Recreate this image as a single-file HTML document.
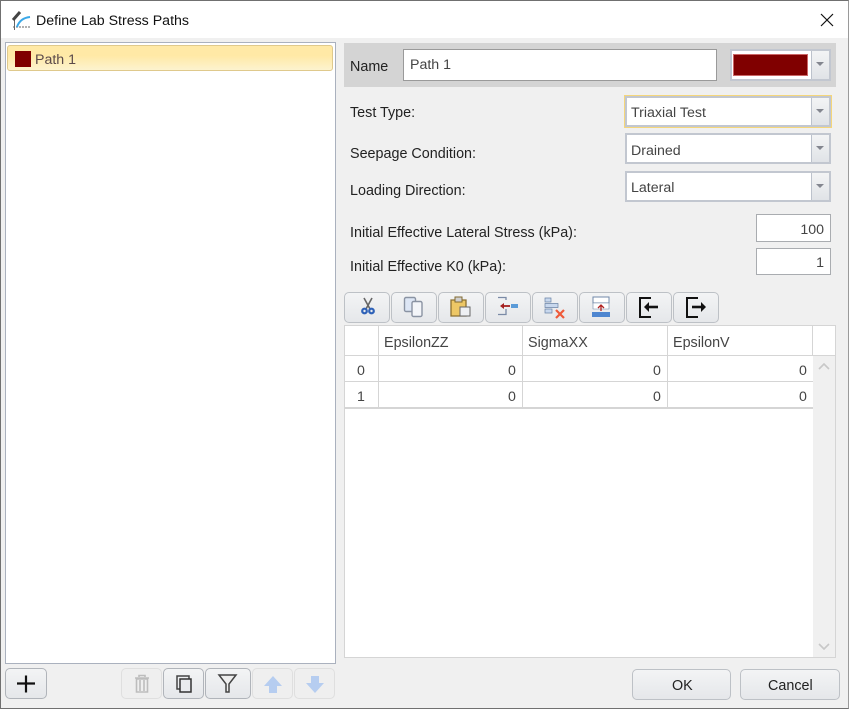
<!DOCTYPE html>
<html><head><meta charset="utf-8"><style>
html,body{margin:0;padding:0;width:849px;height:709px;overflow:hidden;background:#f0f0f0}
body{position:relative;font-family:"Liberation Sans",sans-serif;font-size:14.2px;color:#3a3a3a}
.a{position:absolute;box-sizing:border-box}
.t{position:absolute;white-space:nowrap;line-height:20px;color:#222}
.l{font-size:14.35px}
.btn{position:absolute;box-sizing:border-box;border:1px solid #bdc1c6;border-radius:5px;background:linear-gradient(#f3f4f5,#e5e7ea)}
.dis{border-color:#dfdfdf;background:#efefef}
.input{position:absolute;box-sizing:border-box;background:#fff;border:1px solid #a9acb0}
.combo{position:absolute;box-sizing:border-box;background:#fff;border:2px solid #c2c7d0}
.dd{position:absolute;right:0;top:0;bottom:0;width:17px;background:linear-gradient(#f3f4f5,#e0e3e7);border-left:1px solid #bcc2cc}
.dd:after{content:"";position:absolute;left:4px;top:50%;margin-top:-3px;border:4px solid transparent;border-top:4px solid #83868f;border-bottom:0}
.line{position:absolute;background:#d5d5d5}
svg{position:absolute;left:0;top:0}
</style></head><body>
<div class="a" style="left:0;top:0;width:849px;height:38px;background:#fff"></div>
<svg width="30" height="30" style="left:9px;top:7px">
<path d="M4 20H21" stroke="#666" stroke-width="1" stroke-dasharray="2 1"/><path d="M5.500 13V23" stroke="#666"/>
<path d="M8 20Q11 11 21 10" stroke="#3aa8e8" stroke-width="2" fill="none"/>
<path d="M4 13L11 5" stroke="#444" stroke-width="3"/>
</svg>
<div class="t" style="left:36px;top:11px;color:#111">Define Lab Stress Paths</div>
<svg width="20" height="20" style="left:817px;top:10px"><path d="M4 4L16 16M16 4L4 16" stroke="#111" stroke-width="1.2"/></svg>

<div class="a" style="left:5px;top:42px;width:331px;height:622px;background:#fff;border:1px solid #aab1be"></div>
<div class="a" style="left:7px;top:45px;width:326px;height:26px;border:1px solid #dfc98c;border-radius:3px;background:linear-gradient(#ffe9a6,#ffe9a6 40%,#fdf3cf)"></div>
<div class="a" style="left:15px;top:51px;width:16px;height:16px;background:#800000"></div>
<div class="t" style="left:35px;top:50px;color:#5b4a4a">Path 1</div>

<div class="a" style="left:344px;top:43px;width:492px;height:44px;background:#d4d4d4"></div>
<div class="t l" style="left:350px;top:57px">Name</div>
<div class="input" style="left:403px;top:49px;width:314px;height:32px;border-color:#9a9a9a"></div>
<div class="t" style="left:410px;top:55px;color:#444">Path 1</div>
<div class="combo" style="left:730px;top:49px;width:101px;height:32px"><div class="dd"></div></div>
<div class="a" style="left:733px;top:54px;width:75px;height:22px;background:#800000;border:1px solid #c66"></div>

<div class="t l" style="left:350px;top:103px">Test Type:</div>
<div class="a" style="left:624px;top:95px;width:208px;height:33px;border:1px solid #f5d67a"></div>
<div class="combo" style="left:625px;top:96px;width:206px;height:31px"><div class="dd"></div></div>
<div class="t" style="left:631px;top:103px;color:#444">Triaxial Test</div>
<div class="t l" style="left:350px;top:144px">Seepage Condition:</div>
<div class="combo" style="left:625px;top:133px;width:206px;height:31px"><div class="dd"></div></div>
<div class="t" style="left:631px;top:141px;color:#444">Drained</div>
<div class="t l" style="left:350px;top:181px">Loading Direction:</div>
<div class="combo" style="left:625px;top:171px;width:206px;height:31px"><div class="dd"></div></div>
<div class="t" style="left:631px;top:178px;color:#444">Lateral</div>
<div class="t l" style="left:350px;top:223px">Initial Effective Lateral Stress (kPa):</div>
<div class="input" style="left:756px;top:214px;width:75px;height:28px"></div>
<div class="t" style="right:25px;top:220px;color:#444">100</div>
<div class="t l" style="left:350px;top:257px">Initial Effective K0 (kPa):</div>
<div class="input" style="left:756px;top:248px;width:75px;height:27px"></div>
<div class="t" style="right:25px;top:253px;color:#444">1</div>

<div class="btn" style="left:344px;top:292px;width:46px;height:31px"></div>
<div class="btn" style="left:391px;top:292px;width:46px;height:31px"></div>
<div class="btn" style="left:438px;top:292px;width:46px;height:31px"></div>
<div class="btn" style="left:485px;top:292px;width:46px;height:31px"></div>
<div class="btn" style="left:532px;top:292px;width:46px;height:31px"></div>
<div class="btn" style="left:579px;top:292px;width:46px;height:31px"></div>
<div class="btn" style="left:626px;top:292px;width:46px;height:31px"></div>
<div class="btn" style="left:673px;top:292px;width:46px;height:31px"></div>
<svg width="849" height="330">
<g fill="none">
<path d="M364 298L370 309M372 298L366 309" stroke="#666" stroke-width="1.600"/>
<circle cx="364.500" cy="311" r="2.300" stroke="#2f62b8" stroke-width="2.200"/><circle cx="371.500" cy="311" r="2.300" stroke="#2f62b8" stroke-width="2.200"/>
<rect x="404.500" y="297.500" width="11" height="14" rx="1.500" fill="#dde6f5" stroke="#8a93a3" stroke-width="1.400"/>
<rect x="412" y="301.500" width="10" height="15" rx="1.500" fill="#f3f5f9" stroke="#8a93a3" stroke-width="1.400"/>
<path d="M451 300H466V316H451Z" fill="#edc766" stroke="#8c7030" stroke-width="1.300"/>
<path d="M455 297H462V302H455Z" fill="#cfcfcf" stroke="#806a30"/>
<path d="M460 307H470V316H460Z" fill="#eef0f4" stroke="#666"/>
<path d="M498 297.500H506V300M498 314.500H506V309" stroke="#7a8aa6" stroke-width="1.300"/>
<path d="M502 306H510" stroke="#a52020" stroke-width="1.800"/><path d="M500 306L504 303V309Z" fill="#a52020"/><path d="M511 304H518V308H511Z" fill="#5b9bd8"/>
<path d="M545 298H551V302H545ZM545 303.500H558V307.500H545ZM545 309H552V313H545Z" fill="#c8d8ee" stroke="#6a83a6" stroke-width=".7"/>
<path d="M556 310L564 318M564 310L556 318" stroke="#ef5a3a" stroke-width="2.200"/>
<path d="M593 297H609V303H593Z" fill="#fff" stroke="#7088a8"/><path d="M593 303H609V309H593Z" fill="#fff" stroke="#7088a8" stroke-width=".6"/>
<path d="M601 305V311M598 308L601 305L604 308" stroke="#b02020" stroke-width="1.300"/>
<path d="M592 312H610V317H592Z" fill="#4e86d0"/>
<path d="M651 298H640V317H651" stroke="#111" stroke-width="2"/>
<path d="M647 307H658" stroke="#111" stroke-width="2.600"/><path d="M649 302L644 307L649 312Z" fill="#111"/>
<path d="M698 298H687V317H698" stroke="#111" stroke-width="2"/>
<path d="M692 307H702" stroke="#111" stroke-width="2.600"/><path d="M701 302L706 307L701 312Z" fill="#111"/>
</g></svg>

<div class="a" style="left:344px;top:325px;width:492px;height:333px;background:#fff;border:1px solid #d5d5d5"></div>
<div class="a" style="left:813px;top:356px;width:22px;height:301px;background:#f0f0f0"></div>
<div class="line" style="left:345px;top:355px;width:490px;height:1px"></div>
<div class="line" style="left:345px;top:381px;width:468px;height:1px"></div>
<div class="line" style="left:345px;top:407px;width:468px;height:2px"></div>
<div class="line" style="left:378px;top:326px;width:1px;height:81px"></div>
<div class="line" style="left:522px;top:326px;width:1px;height:81px"></div>
<div class="line" style="left:667px;top:326px;width:1px;height:81px"></div>
<div class="line" style="left:812px;top:326px;width:1px;height:30px"></div>
<div class="t l" style="left:384px;top:333px;color:#444">EpsilonZZ</div>
<div class="t l" style="left:528px;top:333px;color:#444">SigmaXX</div>
<div class="t l" style="left:673px;top:333px;color:#444">EpsilonV</div>
<div class="t" style="left:357px;top:361px;color:#444">0</div>
<div class="t" style="left:357px;top:387px;color:#444">1</div>
<div class="t" style="left:508px;top:361px;color:#444">0</div>
<div class="t" style="left:653px;top:361px;color:#444">0</div>
<div class="t" style="left:799px;top:361px;color:#444">0</div>
<div class="t" style="left:508px;top:387px;color:#444">0</div>
<div class="t" style="left:653px;top:387px;color:#444">0</div>
<div class="t" style="left:799px;top:387px;color:#444">0</div>
<svg width="849" height="709"><path d="M819 369L824 364L829 369M819 644L824 649L829 644" fill="none" stroke="#c8c8c8" stroke-width="1.600"/></svg>

<div class="btn" style="left:5px;top:668px;width:42px;height:31px;border-color:#b0b4ba"></div>
<div class="btn dis" style="left:121px;top:668px;width:41px;height:31px"></div>
<div class="btn" style="left:163px;top:668px;width:41px;height:31px;border-color:#b0b4ba"></div>
<div class="btn" style="left:205px;top:668px;width:46px;height:31px;border-color:#b0b4ba"></div>
<div class="btn dis" style="left:252px;top:668px;width:41px;height:31px"></div>
<div class="btn dis" style="left:294px;top:668px;width:41px;height:31px"></div>
<svg width="849" height="709">
<path d="M26 675.500V692.500M17 683.500H35" stroke="#111" stroke-width="2.200" fill="none"/>
<path d="M135 678H149M139 677V675.500H145V677M136.500 679H147.500V692H136.500ZM140 680V691M144 680V691" stroke="#bdbdbd" stroke-width="1.600" fill="none"/>
<path d="M177 676H189V689H177Z" fill="none" stroke="#444" stroke-width="1.500"/>
<path d="M180 679H191V692H180Z" fill="#e9ebee" stroke="#333" stroke-width="1.500"/>
<path d="M219 675H236L229 684V692H226V684Z" fill="#eee" stroke="#444" stroke-width="1.500"/>
<path d="M273 676L282 686H277V693H269V686H264Z" fill="#b6cdf0"/>
<path d="M311 676H319V683H324L315 693L306 683H311Z" fill="#b6cdf0"/>
</svg>

<div class="btn" style="left:632px;top:669px;width:99px;height:31px"></div>
<div class="t l" style="left:672px;top:676px">OK</div>
<div class="btn" style="left:740px;top:669px;width:100px;height:31px"></div>
<div class="t l" style="left:768px;top:676px">Cancel</div>

<div class="a" style="left:0;top:0;width:849px;height:709px;border:1px solid #707070;border-right-color:#9a9a9a;pointer-events:none"></div>
</body></html>
